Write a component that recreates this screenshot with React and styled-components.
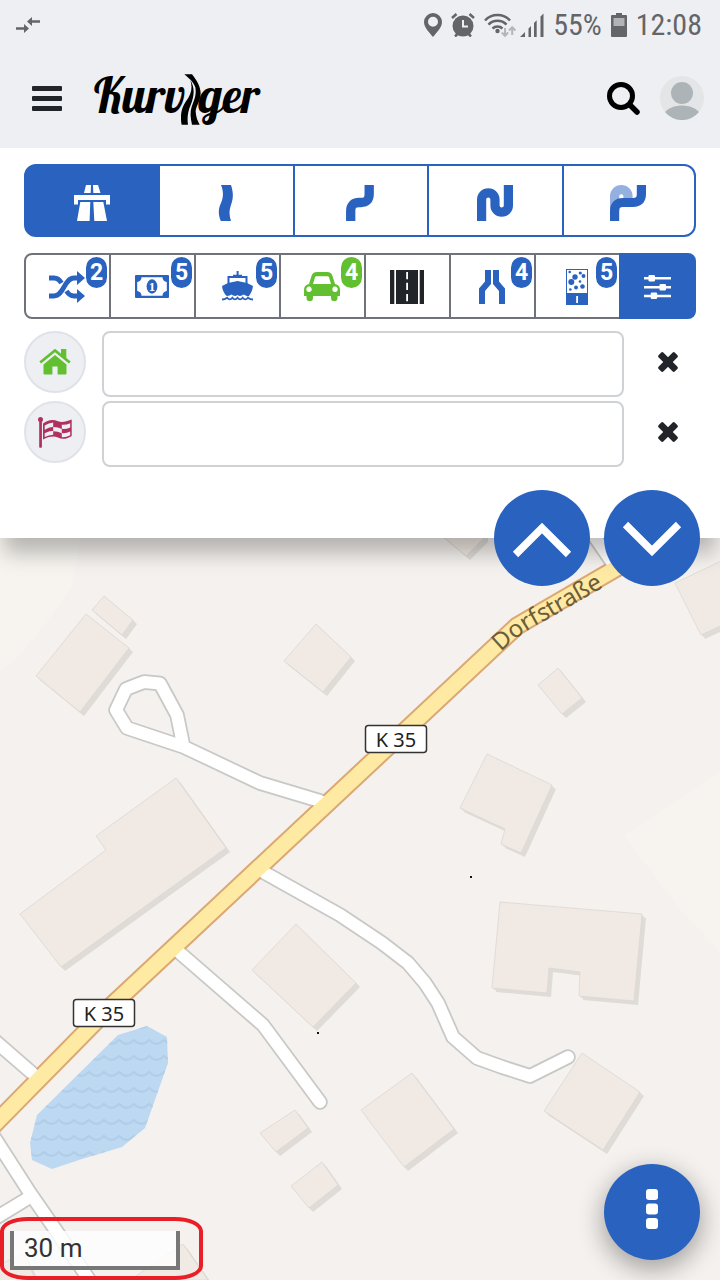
import styled, { createGlobalStyle, css } from 'styled-components';

const colors = {
  blue: '#2a62c0',
  green: '#62bf2f',
  flag: '#b0305f',
  bar: '#edeff3',
  dark: '#212529',
  gray: '#6f7379',
  status: '#646568',
  inputBorder: '#cfd2d5',
  mark: '#e81f27',
  land: '#f4f1ee',
};

const GlobalStyle = createGlobalStyle`
  * {
    box-sizing: border-box;
  }

  body {
    margin: 0;
    font-family: Roboto, "Liberation Sans", sans-serif;
    color: ${colors.dark};
  }

  button {
    padding: 0;
    border: none;
    background: none;
    color: inherit;
    font: inherit;
    cursor: pointer;
  }

  svg {
    display: block;
    flex: none;
  }
`;

const Page = styled.div`
  display: flex;
  flex-direction: column;
  min-height: 100vh;
`;

const Header = styled.header`
  background-color: ${colors.bar};
`;

const StatusBar = styled.div`
  display: flex;
  align-items: center;
  gap: 9px;
  height: 50px;
  padding: 0 18px 0 16px;
  color: ${colors.status};
`;

const StatusText = styled.span`
  font-family: 'Roboto Condensed', Roboto, sans-serif;
  font-size: 30px;
  line-height: 50px;
`;

const Spacer = styled.div`
  flex: 1;
`;

const AppBar = styled.div`
  display: flex;
  align-items: center;
  height: 98px;
  padding: 0 16px 2px 32px;
`;

const Logo = styled.a`
  display: flex;
  align-items: center;
  margin-left: 32px;
  padding-bottom: 6px;
  color: #000;
  text-decoration: none;
  font-family: Lobster, 'Liberation Serif', serif;
  font-size: 48px;
  line-height: 48px;

  svg {
    margin: 8px -2px 0 -4px;
  }
`;

const SearchButton = styled.button`
  color: #000;
`;

const AvatarButton = styled.button`
  margin-left: 20px;
`;

const Panel = styled.section`
  position: relative;
  z-index: 1;
  padding: 16px 24px 71px;
  background-color: #fff;
  box-shadow: 0 19px 20px -4px rgba(0, 0, 0, 0.26);
`;

const Modes = styled.div`
  display: grid;
  grid-template-columns: repeat(5, 1fr);
  height: 73px;
`;

const Options = styled.div`
  display: grid;
  grid-template-columns: repeat(7, 85fr) 77fr;
  height: 66px;
  margin: 16px 0 12px;
`;

const Cell = styled.button`
  position: relative;
  display: flex;
  align-items: center;
  justify-content: center;
  margin-right: -2px;
  padding-top: 1px;
  padding-right: 1px;
  border: 2px solid ${props => props.$border};
  color: ${props => props.$color || colors.blue};

  &:first-child {
    border-radius: ${props => props.$radius}px 0 0 ${props => props.$radius}px;
  }

  &:last-child {
    margin-right: 0;
    border-radius: 0 ${props => props.$radius}px ${props => props.$radius}px 0;
  }

  ${props =>
    props.$active &&
    css`
      border-color: ${colors.blue};
      background-color: ${colors.blue};
      color: #fff;
    `}
`;

const ModeCell = styled(Cell)`
  padding-top: 4px;
`;

const Badge = styled.span`
  position: absolute;
  top: 2px;
  right: 2px;
  width: 21px;
  border-radius: 11px;
  background-color: ${props => props.$color || colors.blue};
  color: #fff;
  font-size: 23px;
  line-height: 31px;
  font-weight: 700;
  text-align: center;
`;

const Waypoint = styled.div`
  display: flex;
  align-items: flex-start;
  gap: 16px;

  & + & {
    margin-top: 4px;
  }
`;

const WaypointLabel = styled.label`
  display: flex;
  align-items: center;
  justify-content: center;
  width: 62px;
  height: 62px;
  border: 2px solid #dfe2e8;
  border-radius: 50%;
  background-color: ${colors.bar};
  color: ${props => props.$color};
`;

const WaypointInput = styled.input`
  flex: 1;
  min-width: 0;
  height: 66px;
  padding: 0 16px;
  border: 2px solid ${colors.inputBorder};
  border-radius: 8px;
  background-color: #fff;
  font: inherit;
  font-size: 26px;
`;

const ClearButton = styled.button`
  display: flex;
  align-items: center;
  justify-content: center;
  width: 56px;
  height: 62px;
`;

const Fab = styled.button`
  display: flex;
  align-items: center;
  justify-content: center;
  width: 96px;
  height: 96px;
  border-radius: 50%;
  background-color: ${colors.blue};
  color: #fff;
`;

const FabGroup = styled.div`
  position: absolute;
  right: 20px;
  bottom: -48px;
  display: flex;
  gap: 14px;
`;

const MenuFab = styled(Fab)`
  position: absolute;
  right: 20px;
  bottom: 20px;
  padding-bottom: 6px;
  box-shadow: 0 8px 24px 2px rgba(0, 0, 0, 0.32);
`;

const MapArea = styled.main`
  position: relative;
  flex: 1;
  min-height: 480px;
  overflow: hidden;
  background-color: ${colors.land};
`;

const MapCanvas = styled.svg`
  position: absolute;
  inset: 0;
  width: 100%;
  height: 100%;
`;

const MapText = styled.text`
  font-family: 'Noto Sans', sans-serif;
  font-size: ${props => props.$size}px;
`;

const BillText = styled.text`
  font-family: 'Liberation Serif', serif;
  font-size: 13px;
  font-weight: 700;
`;

const ScaleMark = styled.div`
  position: absolute;
  left: 0;
  bottom: 0;
  padding: 10px 19px 6px 6px;
  border: 4px solid ${colors.mark};
  border-radius: 28px / 14px;
`;

const Scale = styled.div`
  width: 170px;
  padding-left: 10px;
  border: 4px solid #777;
  border-top: none;
  background-color: rgba(255, 255, 255, 0.8);
  color: #333;
  font-size: 26px;
  line-height: 35px;
`;

/* icons */

const Icon = ({ w, h, children, ...rest }) => (
  <svg
    width={w}
    height={h}
    viewBox={`0 0 ${w} ${h}`}
    fill="currentColor"
    aria-hidden="true"
    {...rest}
  >
    {children}
  </svg>
);

const Line = props => <path fill="none" stroke="currentColor" {...props} />;

const TransferIcon = () => (
  <Icon w={24} h={16}>
    <path d="M0 10.2h8V7l5 4.5L8 16v-3.2H0zM24 3.2h-8V0l-5 4.5 5 4.5V5.800h8z" />
  </Icon>
);

const PinIcon = () => (
  <Icon w={18} h={24}>
    <path
      fillRule="evenodd"
      d="M9 0a9 9 0 0 0-9 9c0 5.500 5 10 9 15 4-5 9-9.500 9-15a9 9 0 0 0-9-9zm0 3.800a5 5 0 1 1 0 10 5 5 0 0 1 0-10z"
    />
  </Icon>
);

const AlarmIcon = () => (
  <Icon w={24} h={24}>
    <circle cx="12" cy="13" r="10.5" />
    <Line d="M1 5l4.5-4M23 5l-4.5-4M4 23.5l3-3M20 23.5l-3-3" strokeWidth="2.5" />
    <Line d="M12 7v6.5h5" stroke={colors.bar} strokeWidth="2" />
  </Icon>
);

const WifiIcon = () => (
  <Icon w={27} h={24} overflow="visible">
    <Line
      d="M1 7.5a17 17 0 0 1 25 0M4.5 11.7a12.5 12.5 0 0 1 18 0M8.5 15.5a7.5 7.5 0 0 1 10 0"
      strokeWidth="2.5"
    />
    <circle cx="13.5" cy="18" r="2.2" />
    <g stroke="#b5b6b9" strokeWidth="2" fill="none">
      <path d="M21 15v7.5M17.8 19.5l3.2 3.3 3.2-3.3M28.2 22v-7.5M25 17.5l3.2-3.3 3.2 3.3" />
    </g>
  </Icon>
);

const SignalIcon = () => (
  <Icon w={24} h={24}>
    <path d="M0 24l5-5v5zM8.500 15.500L11 13v11H8.500zM14 10l2.700-2.700V24H14zM20.500 3.500L23.500 .5V24h-3z" />
  </Icon>
);

const BatteryIcon = () => (
  <Icon w={16} h={24}>
    <path d="M5 0h6v2h4a1 1 0 0 1 1 1v20a1 1 0 0 1-1 1H1a1 1 0 0 1-1-1V3a1 1 0 0 1 1-1h4z" />
    <path d="M2.500 5h11v8h-11z" fill="#b2b3b6" />
  </Icon>
);

const BarsIcon = () => (
  <Icon w={30} h={25}>
    <rect width="30" height="5" rx="1" />
    <rect y="10" width="30" height="5" rx="1" />
    <rect y="20" width="30" height="5" rx="1" />
  </Icon>
);

const LogoRoad = () => (
  <svg width="20" height="51" viewBox="540 222 60 153" aria-hidden="true">
    <path d="M550 223H573C589 243 599 262 599 280C598 305 584 320 584 335C585 352 590 362 596 374H573C568 352 567 335 572 320C580 300 587 285 583 262C577 245 564 235 550 223Z" />
    <path d="M568 240C583 265 579 290 569 315C560 335 558 355 561 374H542C537 350 540 325 554 305C572 283 575 262 568 240Z" />
  </svg>
);

const SearchIcon = () => (
  <Icon w={33} h={33}>
    <Line d="M24 24l6 6" strokeWidth="5.5" strokeLinecap="round" />
    <circle cx="14" cy="14" r="11.5" fill="none" stroke="currentColor" strokeWidth="5" />
  </Icon>
);

const AvatarIcon = () => (
  <Icon w={44} h={44}>
    <circle cx="22" cy="22" r="22" fill="#e3e5e7" />
    <circle cx="22" cy="17" r="11" fill="#adb4b8" />
    <path d="M5 36C9 31.5 16 29.5 22 29.5S35 31.5 39 36A22 22 0 0 1 5 36Z" fill="#adb4b8" />
  </Icon>
);

const MotorwayIcon = () => (
  <Icon w={36} h={36}>
    <path d="M12 0h5l-.3 8H10zM19 0h5l2.500 8h-7.200zM0 10h36v9.500h-4V15H4v4.500H0zM6.300 17h10l-.7 19H3zM19.300 17h10L33 36H20.300z" />
  </Icon>
);

const SlightCurveIcon = () => (
  <Icon w={36} h={36}>
    <path d="M13 0h10c2.500 8 2.500 13 0 20-2 5-2 10 0 16H12.800c-2.500-6-2.800-12 .2-18 2.700-6 2.500-12 0-18z" />
  </Icon>
);

const CurveIcon = () => (
  <Icon w={36} h={36}>
    <Line d="M8.7 36V26Q8.7 17.5 17 17.5H19Q27.2 17.5 27.2 9V0" strokeWidth="9.3" />
  </Icon>
);

const SnakeIcon = () => (
  <Icon w={36} h={36}>
    <Line
      d="M4.6 36V14.5A6.7 6.7 0 0 1 18 14.5V20.5A6.7 6.7 0 0 0 31.4 20.5V0"
      strokeWidth="9.2"
    />
  </Icon>
);

const RoundTripIcon = () => (
  <Icon w={36} h={36}>
    <Line d="M4.6 26V11.3A6.7 6.7 0 0 1 18 11.3V15" strokeWidth="9.2" opacity="0.5" />
    <Line d="M4.6 36V26Q4.6 17.5 13 17.5H23Q31.4 17.5 31.4 9V0" strokeWidth="9.2" />
  </Icon>
);

const ShuffleIcon = () => (
  <Icon w={36} h={32}>
    <Line
      d="M0 7H5C9 7 11 9.5 12.5 12M17.5 20C19 22.5 21 25 25 25H29M0 25H5C15 25 15 7 25 7H29"
      strokeWidth="4.8"
    />
    <path d="M28 0l8 7-8 7zM28 18l8 7-8 7z" />
  </Icon>
);

const MoneyIcon = () => (
  <Icon w={34} h={23}>
    <rect width="34" height="23" rx="1" />
    <path
      fill="#fff"
      d="M6.5 2.3H27.5A4.5 4.5 0 0 0 31.8 7V16A4.5 4.5 0 0 0 27.5 20.7H6.5A4.5 4.5 0 0 0 2.2 16V7A4.5 4.5 0 0 0 6.5 2.3Z"
    />
    <ellipse cx="17" cy="11.5" rx="5.4" ry="7.2" />
    <BillText x="17" y="16" textAnchor="middle" fill="#fff">
      1
    </BillText>
  </Icon>
);

const ShipIcon = () => (
  <Icon w={31} h={31}>
    <path d="M14.600 0h2v6h-2z" />
    <Line d="M6.5 14V6H24.5V14M11 4.8H20" strokeWidth="2" />
    <path d="M0 15l6-3 9.500-2L25 12l6 3c-.3 4-2 7-4 10-2 .8-3.500-.8-5.500-1.500-2 1.500-4 2-6 .5-2 1.500-4 1-6-.5-2 .8-3.500 2-5.500 1C2 22 .3 19 0 15z" />
    <Line
      d="M0 28.500c2.500 0 3.500-.5 5.200-1.800 1.700 2.300 3.500 2.300 5.200 0 1.700 2.300 3.500 2.300 5.100 0 1.700 2.300 3.500 2.300 5.200 0 1.700 2.300 3.500 2.300 5.200 0 1.600 1.300 2.700 1.800 5.100 1.800"
      strokeWidth="1.8"
    />
  </Icon>
);

const CarIcon = () => (
  <Icon w={36} h={29}>
    <path
      fillRule="evenodd"
      d="M5 12L7.500 4Q8.700 0 13 0H23Q27.300 0 28.500 4L31 12Q36 13 36 18V24H33.500V26a3.200 3.200 0 0 1-6.500 0V24H9V26a3.200 3.200 0 0 1-6.500 0V24H0V18Q0 13 5 12ZM9 12H27L25 5.200Q24.700 4.300 23.500 4.300H12.500Q11.300 4.300 11 5.200ZM5 14.600a2.700 2.700 0 1 0 .01 0ZM31 14.600a2.700 2.700 0 1 0 .01 0Z"
    />
  </Icon>
);

const HighwayIcon = () => (
  <Icon w={34} h={34}>
    <path d="M0 0h4.300v34H0zM6 0h22v34H6zM29.700 0H34v34h-4.300z" />
    <path d="M16.200 2h1.800v7.300h-1.800zM16.200 12.700h1.800V20h-1.800zM16.200 24h1.800v7.300h-1.800z" fill="#fff" />
  </Icon>
);

const NarrowIcon = () => (
  <Icon w={26} h={34}>
    <path d="M6 0h6v14l-6 7v13H0V18.500l6-7zM20 0h-6v14l6 7v13h6V18.500l-6-7z" />
  </Icon>
);

const stones = [
  [3.7, 3, 1.3],
  [14.3, 4, 1.6],
  [9, 8, 2.7],
  [17.5, 7, 2],
  [5.3, 13, 3],
  [14, 12.5, 1.3],
  [16.5, 17.5, 2.3],
  [10, 18.5, 2],
  [4.3, 20.5, 1.3],
];

const SurfaceIcon = () => (
  <Icon w={22} h={36}>
    <path d="M0 0h22v36H0z" />
    <path d="M1 1h20v23H1zM10.200 27h1.800v7h-1.800z" fill="#fff" />
    {stones.map(([cx, cy, r]) => (
      <circle key={`${cx}-${cy}`} cx={cx} cy={cy} r={r} />
    ))}
  </Icon>
);

const SlidersIcon = () => (
  <Icon w={27} h={24}>
    <path d="M0 2h27v2.400H0zM0 11h27v2.400H0zM0 19.800h27v2.400H0z" />
    <rect x="4.5" width="6.5" height="6.5" rx="1.2" />
    <rect x="15.5" y="8.9" width="6.5" height="6.5" rx="1.2" />
    <rect x="6.7" y="17.5" width="6.5" height="6.5" rx="1.2" />
  </Icon>
);

const HomeIcon = () => (
  <Icon w={32} h={26}>
    <Line d="M1.200 13.500L16 1.500l14.800 12" strokeWidth="2.8" />
    <path d="M22 0h5.300v9.500L22 5z" />
    <path d="M4.500 15.500L16 6l11.500 9.500V24.500a1 1 0 0 1-1 1H18.600V17.500h-5.200V25.500H5.500a1 1 0 0 1-1-1z" />
  </Icon>
);

const FlagIcon = () => (
  <Icon w={34} h={31}>
    <circle cx="2.5" cy="2.5" r="2.5" />
    <path d="M1.200 4h2.700v26a.8.8 0 0 1-.8.800H2a.8.8 0 0 1-.8-.8z" />
    <path d="M5 6.500C10 2.500 15 2 20 4.200C24 6 28 4.500 33.700 2.500V19C28 22.500 24 22.500 20 20.500C15 18.500 10 20 5 22.500Z" />
    <g fill={colors.bar}>
      <path d="M6.700 8.500q4-2.500 8.500-3v4.300q-4.500.4-8.500 2.900zM15.200 9.900q4.400-.1 8.600 2v4.400q-4.200-2.100-8.600-2zM23.800 7.700q4.200.4 8.400-1.500v4.200q-4.200 2-8.400 1.400zM6.700 16.200q4-2.200 8.500-2.500v4q-4.500.3-8.500 2.400zM23.800 16q4.200.6 8.400-1.500v3.700q-4.200 2.200-8.400 1.900z" />
    </g>
  </Icon>
);

const CloseIcon = () => (
  <Icon w={20} h={20}>
    <rect x="-1.5" y="6.6" width="23" height="6.8" rx="1.8" transform="rotate(45 10 10)" />
    <rect x="-1.5" y="6.6" width="23" height="6.8" rx="1.8" transform="rotate(-45 10 10)" />
  </Icon>
);

const ChevronUpIcon = () => (
  <Icon w={60} h={36} overflow="visible">
    <Line d="M3.500 34.500L30 8 56.500 34.500" strokeWidth="7.5" />
  </Icon>
);

const ChevronDownIcon = () => (
  <Icon w={60} h={36} overflow="visible">
    <Line d="M3.500 4.500L30 31 56.500 4.500" strokeWidth="7.5" />
  </Icon>
);

const DotsIcon = () => (
  <Icon w={12} h={40}>
    <rect width="12" height="11" rx="3" />
    <rect y="14.5" width="12" height="11" rx="3" />
    <rect y="29" width="12" height="11" rx="3" />
  </Icon>
);

/* map */

const buildings = [
  '86,614 129,648 80,712 36,676',
  '104,596 133,620 122,635 92,610',
  '316,624 351,657 323,692 284,661',
  '176,778 226,848 61,967 20,914 106,850 96,836',
  '558,668 582,698 562,714 538,685',
  '487,754 552,785 521,853 501,844 505,829 460,808',
  '500,902 642,914 634,1001 579,996 580,972 549,968 547,993 492,988',
  '582,1053 640,1092 603,1150 544,1111',
  '412,1073 454,1129 404,1167 361,1110',
  '296,924 356,983 313,1027 252,970',
  '295,1110 308,1128 276,1152 260,1133',
  '322,1162 338,1185 309,1208 291,1186',
  '675,583 740,552 740,617 701,635',
  '440,534 466,556 484,538 484,520',
  '183,1244 208,1280 130,1280',
  '-5,1266 24,1254 40,1290 -5,1290',
];

const pond =
  '147,1026 167,1037 168,1063 145,1128 122,1147 82,1159 52,1169 32,1160 30,1143 37,1115 118,1035';

const lanes = [
  'M320 801L260 783 184 747 127 728 116 710 126 689 144 682 160 683.5 177 715 183 744',
  'M265 873L340 915 382 943 408 963 425 983 438 1003 453 1037 477 1058 502 1067 530 1076 568 1057',
  'M180 953L263 1025 320 1102',
  'M-6 1040L32 1073',
  'M-6 1137L30 1193 57 1232 92 1284',
  'M-6 1219L30 1197',
  'M590 530L612 562',
];

const mainRoad = 'M660 545L615 569 517 626 203 920 110 1007 -12 1131';

const shields = [
  { x: 365, y: 725 },
  { x: 73, y: 999 },
];

const StreetMap = () => (
  <MapCanvas
    viewBox="0 538 720 742"
    preserveAspectRatio="xMinYMin slice"
    role="img"
    aria-label="Dorfstraße"
  >
    <defs>
      <pattern id="waves" x="29" y="1038" width="15" height="16" patternUnits="userSpaceOnUse">
        <path
          d="M-1 1.500L0 2Q7.500 9.500 15 2L16 1.500"
          fill="none"
          stroke="#aecae6"
          strokeWidth="2.2"
          opacity="0.8"
        />
      </pattern>
    </defs>
    <g fill="#f7f4ef">
      <path d="M0 538H80L73 585 45 625 20 655 0 672Z" />
      <path d="M720 772L624 836 680 910 720 952Z" />
    </g>
    {buildings.map(points => (
      <g key={points}>
        <polygon points={points} transform="translate(4 4)" fill="#dfdcd7" />
        <polygon points={points} transform="translate(2 2)" fill="#dfdcd7" />
        <polygon points={points} fill="#f1eae4" stroke="#dcd8d1" strokeWidth="0.8" />
      </g>
    ))}
    <polygon points={pond} fill="#bdd8f1" />
    <polygon points={pond} fill="url(#waves)" />
    <g fill="none" strokeLinecap="round" strokeLinejoin="round">
      {lanes.map(d => (
        <path key={d} d={d} stroke="#c8c8c6" strokeWidth="15.5" />
      ))}
      <path d={mainRoad} stroke="#dba873" strokeWidth="19" />
      {lanes.map(d => (
        <path key={d} d={d} stroke="#fff" strokeWidth="12" />
      ))}
      <path d={mainRoad} stroke="#feeaa3" strokeWidth="15" />
    </g>
    <path id="street" d="M501 652Q522 631 548 619L614 581" fill="none" />
    <MapText $size={24} fill="#6d5c37">
      <textPath href="#street">Dorfstraße</textPath>
    </MapText>
    {shields.map(({ x, y }) => (
      <g key={x}>
        <rect
          x={x + 0.5}
          y={y + 0.5}
          width="61"
          height="27"
          rx="3"
          fill="#fff"
          stroke="#333"
          strokeWidth="1.5"
        />
        <MapText $size={20} x={x + 31} y={y + 22} textAnchor="middle" fill="#222">
          K 35
        </MapText>
      </g>
    ))}
    <path d="M470 876h2v2h-2zM317 1032h2v2h-2z" fill="#111" />
  </MapCanvas>
);

const modes = [
  { name: 'Fastest', icon: MotorwayIcon, active: true },
  { name: 'Fast and curvy', icon: SlightCurveIcon },
  { name: 'Curvy', icon: CurveIcon },
  { name: 'Extra curvy', icon: SnakeIcon },
  { name: 'Round trip', icon: RoundTripIcon },
];

const options = [
  { name: 'Alternatives', icon: ShuffleIcon, count: 2 },
  { name: 'Tolls', icon: MoneyIcon, count: 5 },
  { name: 'Ferries', icon: ShipIcon, count: 5 },
  { name: 'Small roads', icon: CarIcon, count: 4, color: colors.green },
  { name: 'Motorways', icon: HighwayIcon, color: colors.dark },
  { name: 'Narrow roads', icon: NarrowIcon, count: 4 },
  { name: 'Unpaved roads', icon: SurfaceIcon, count: 5 },
  { name: 'Settings', icon: SlidersIcon, active: true },
];

const waypoints = [
  { id: 'start', name: 'Start', icon: HomeIcon, color: colors.green },
  { id: 'finish', name: 'Destination', icon: FlagIcon, color: colors.flag },
];

const App = () => {
  return (
    <Page>
      <GlobalStyle />
      <Header>
        <StatusBar>
          <TransferIcon />
          <Spacer />
          <PinIcon />
          <AlarmIcon />
          <WifiIcon />
          <SignalIcon />
          <StatusText>55%</StatusText>
          <BatteryIcon />
          <StatusText>12:08</StatusText>
        </StatusBar>
        <AppBar>
          <button type="button" aria-label="Menu">
            <BarsIcon />
          </button>
          <Logo href="#" aria-label="Kurviger">
            Kurv
            <LogoRoad />
            ger
          </Logo>
          <Spacer />
          <SearchButton type="button" aria-label="Search">
            <SearchIcon />
          </SearchButton>
          <AvatarButton type="button" aria-label="Account">
            <AvatarIcon />
          </AvatarButton>
        </AppBar>
      </Header>

      <Panel>
        <Modes>
          {modes.map(({ name, icon: ModeIcon, active }) => (
            <ModeCell
              key={name}
              type="button"
              aria-label={name}
              $border={colors.blue}
              $radius={12}
              $active={active}
            >
              <ModeIcon />
            </ModeCell>
          ))}
        </Modes>
        <Options>
          {options.map(({ name, icon: OptionIcon, count, color, active }) => (
            <Cell
              key={name}
              type="button"
              aria-label={name}
              $border={colors.gray}
              $radius={8}
              $color={color}
              $active={active}
            >
              <OptionIcon />
              {count && <Badge $color={color}>{count}</Badge>}
            </Cell>
          ))}
        </Options>
        {waypoints.map(({ id, name, icon: WaypointIcon, color }) => (
          <Waypoint key={id}>
            <WaypointLabel htmlFor={id} aria-label={name} $color={color}>
              <WaypointIcon />
            </WaypointLabel>
            <WaypointInput id={id} type="text" />
            <ClearButton type="button" aria-label={`Clear ${name}`}>
              <CloseIcon />
            </ClearButton>
          </Waypoint>
        ))}
        <FabGroup>
          <Fab type="button" aria-label="Collapse">
            <ChevronUpIcon />
          </Fab>
          <Fab type="button" aria-label="Expand">
            <ChevronDownIcon />
          </Fab>
        </FabGroup>
      </Panel>

      <MapArea>
        <StreetMap />
        <ScaleMark>
          <Scale>30 m</Scale>
        </ScaleMark>
        <MenuFab type="button" aria-label="More">
          <DotsIcon />
        </MenuFab>
      </MapArea>
    </Page>
  );
};

export default App;
